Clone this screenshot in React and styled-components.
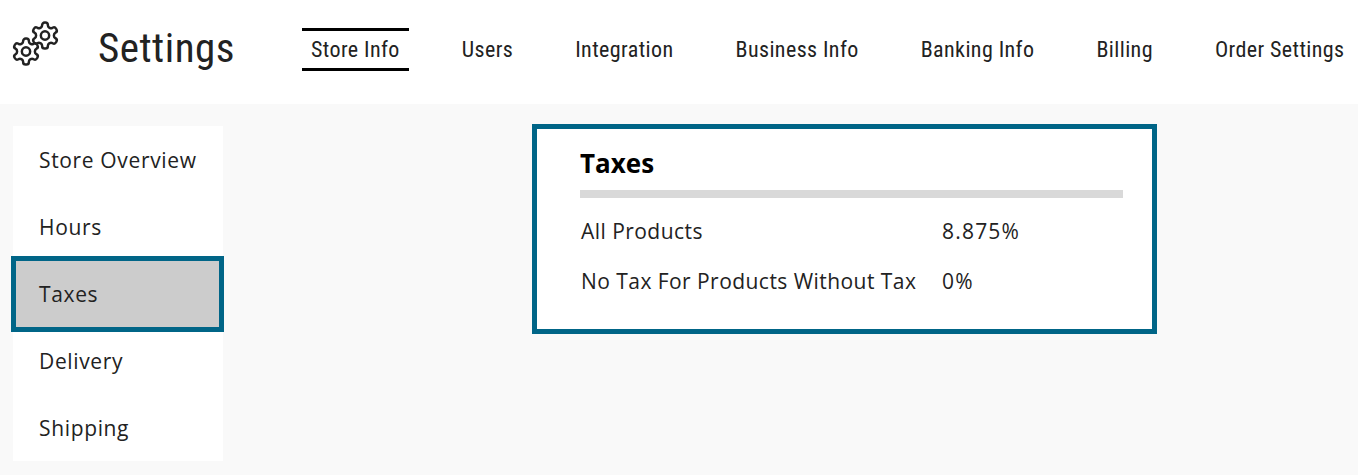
import React from "react";
import styled, { createGlobalStyle } from "styled-components";

const Global = createGlobalStyle`
  html, body { margin: 0; padding: 0; background: #f9f9f9; }
  body { font-family: "Open Sans", sans-serif; color: #222; }
`;
const Page = styled.div`width: 1358px; height: 475px; overflow: hidden; background: #f9f9f9;`;
const Header = styled.header`
  height: 104px; background: #fff; display: flex; align-items: center; padding-left: 13px; box-sizing: border-box;
`;
const GearIcon = styled.svg`width: 46px; height: 50px; flex: none; margin-bottom: 18px; overflow: visible;`;
const Title = styled.h1`
  margin: 0 0 8px 39px; width: 204px; flex: none;
  font: 400 41px/1 Roboto, sans-serif; font-stretch: 75%; letter-spacing: .5px; color: #222;
`;
const Nav = styled.nav`display: flex; align-items: center; gap: 44px; margin-bottom: 5px;`;
const Tab = styled.a`
  display: block; padding: 6px 9px 5px;
  font: 400 22px/26px Roboto, sans-serif; font-stretch: 80%; letter-spacing: .4px; color: #222; white-space: nowrap;
  border-top: 3px solid ${p => (p.$active ? "#000" : "transparent")};
  border-bottom: 3px solid ${p => (p.$active ? "#000" : "transparent")};
`;
const Main = styled.main`display: flex; align-items: flex-start; padding: 20px 0 0 13px;`;
const Side = styled.ul`
  margin: 2px 0 0; padding: 0; list-style: none; width: 210px; background: #fff; flex: none;
`;
const SideItem = styled.li`
  box-sizing: border-box; height: ${p => (p.$active ? "76px" : "67px")};
  margin: ${p => (p.$active ? "-4px -1px -5px -2px" : "0")};
  display: flex; align-items: center; padding-left: ${p => (p.$active ? "23px" : "26px")};
  font-size: 21px; letter-spacing: .65px; color: #222;
  background: ${p => (p.$active ? "#ccc" : "transparent")};
  border: ${p => (p.$active ? "5px solid #006587" : "none")};
  position: relative;
`;
const Card = styled.section`
  box-sizing: border-box; width: 625px; height: 210px; margin-left: 309px; background: #fff;
  border: 5px solid #006587; padding: 14px 29px 0 43px;
`;
const CardTitle = styled.h2`
  margin: 0; font: 700 26px/40px "Open Sans", sans-serif; color: #000; padding-bottom: 7px;
  border-bottom: 8px solid #d9d9d9;
`;
const Rows = styled.div`
  display: grid; grid-template-columns: 361px 1fr; margin-top: 8px; padding-left: 1px;
  font-size: 21px; line-height: 50px; color: #222; letter-spacing: .45px;
`;
const Label = styled.div`white-space: nowrap;`;
const Value = styled.div`white-space: nowrap; letter-spacing: 1.2px;`;

const GEAR = "M12.22 2h-.44a2 2 0 0 0-2 2v.18a2 2 0 0 1-1 1.73l-.43.25a2 2 0 0 1-2 0l-.15-.08a2 2 0 0 0-2.73.73l-.22.38a2 2 0 0 0 .73 2.73l.15.1a2 2 0 0 1 1 1.72v.51a2 2 0 0 1-1 1.74l-.15.09a2 2 0 0 0-.73 2.73l.22.38a2 2 0 0 0 2.73.73l.15-.08a2 2 0 0 1 2 0l.43.25a2 2 0 0 1 1 1.73V20a2 2 0 0 0 2 2h.44a2 2 0 0 0 2-2v-.18a2 2 0 0 1 1-1.73l.43-.25a2 2 0 0 1 2 0l.15.08a2 2 0 0 0 2.73-.73l.22-.39a2 2 0 0 0-.73-2.73l-.15-.08a2 2 0 0 1-1-1.74v-.5a2 2 0 0 1 1-1.74l.15-.09a2 2 0 0 0 .73-2.73l-.22-.38a2 2 0 0 0-2.73-.73l-.15.08a2 2 0 0 1-2 0l-.43-.25a2 2 0 0 1-1-1.73V4a2 2 0 0 0-2-2z";

const Gears = () => (
  <GearIcon viewBox="0 0 46 50" fill="none" stroke="#222" strokeWidth="1.9" strokeLinejoin="round">
    <g transform="translate(16.4 1.9) scale(1.3)"><path d={GEAR} /><circle cx="12" cy="12" r="3.2" /></g>
    <g transform="translate(-2.6 17.9) scale(1.3)"><path d={GEAR} /><circle cx="12" cy="12" r="3.2" /></g>
  </GearIcon>
);

const tabs = ["Store Info", "Users", "Integration", "Business Info", "Banking Info", "Billing", "Order Settings"];
const items = ["Store Overview", "Hours", "Taxes", "Delivery", "Shipping"];

export default function App() {
  return (
    <Page>
      <Global />
      <Header>
        <Gears />
        <Title>Settings</Title>
        <Nav>{tabs.map((t, i) => <Tab key={t} $active={i === 0}>{t}</Tab>)}</Nav>
      </Header>
      <Main>
        <Side>{items.map(t => <SideItem key={t} $active={t === "Taxes"}>{t}</SideItem>)}</Side>
        <Card>
          <CardTitle>Taxes</CardTitle>
          <Rows>
            <Label>All Products</Label><Value>8.875%</Value>
            <Label>No Tax For Products Without Tax</Label><Value>0%</Value>
          </Rows>
        </Card>
      </Main>
    </Page>
  );
}
